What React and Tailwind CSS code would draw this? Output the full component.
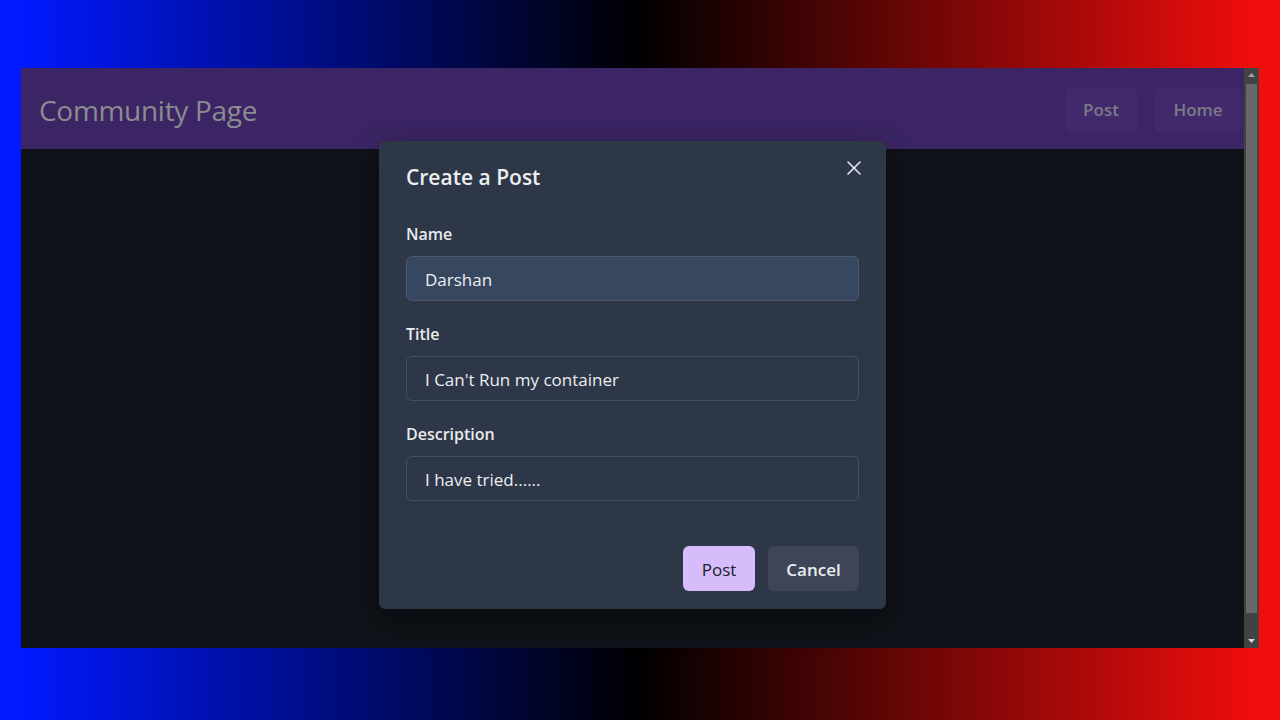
import React from "react";

const font = { fontFamily: '"Open Sans", "Noto Sans", sans-serif' };

function Field({ label, value, filled }) {
  return (
    <div className="flex flex-col">
      <div className="text-[16px] font-semibold text-[#e9eaec] leading-[24px] h-[24px]">{label}</div>
      <div
        className={
          "mt-[10px] h-[45px] rounded-[6px] border flex items-center pl-[18px] pt-[2px] text-[17px] text-[#eceef0] " +
          (filled ? "bg-[#374760] border-[#4b5870]" : "bg-transparent border-[#465063]")
        }
      >
        {value}
      </div>
    </div>
  );
}

export default function App() {
  return (
    <div
      className="relative w-[1280px] h-[720px] overflow-hidden bg-[linear-gradient(to_right,#0019ff_1.6%,#000_50%,#f20d0d_98.4%)] pt-[68px] pl-[21px]"
      style={font}
    >
      <div className="flex w-[1238px] h-[580px]">
        <div className="flex-1 flex flex-col">
          <div className="h-[81px] bg-[#3b2564] flex items-center justify-between pl-[18px] pr-[3px]">
            <div className="text-[28px] pt-[2px] text-[#8b8c90] tracking-[-0.3px]">Community Page</div>
            <div className="flex gap-[18px] pt-[2px]">
              <div className="w-[72px] h-[45px] rounded-[6px] bg-[#41296b] flex items-center justify-center text-[17px] font-semibold text-[#7c7b88]">Post</div>
              <div className="w-[86px] h-[45px] rounded-[6px] bg-[#41296b] flex items-center justify-center text-[17px] font-semibold text-[#7c7b88]">Home</div>
            </div>
          </div>
          <div className="flex-1 bg-[#0f1218]"></div>
        </div>
        <div className="w-[15px] bg-[#424242] flex flex-col items-center">
          <div className="h-[14px] flex items-center justify-center">
            <svg width="7" height="4" viewBox="0 0 7 4"><path d="M3.5 0L7 4H0z" fill="#a3a3a3" /></svg>
          </div>
          <div className="w-[11px] mt-[2px] h-[529px] bg-[#686868]"></div>
          <div className="flex-1"></div>
          <div className="h-[14px] flex items-center justify-center">
            <svg width="7" height="4" viewBox="0 0 7 4"><path d="M0 0H7L3.5 4z" fill="#d9d9d9" /></svg>
          </div>
        </div>
      </div>

      <div className="absolute left-[379px] top-[141px] w-[507px] h-[468px] rounded-[6px] bg-[#2d3748] shadow-[0_10px_30px_rgba(0,0,0,0.4)] px-[27px] flex flex-col">
        <div className="h-[72px] flex items-center pt-[2px]">
          <div className="text-[21px] font-semibold text-[#eceef0]">Create a Post</div>
        </div>
        <button className="absolute left-[459px] top-[11px] w-[32px] h-[32px] flex items-center justify-center">
          <svg width="14" height="14" viewBox="0 0 14 14">
            <path d="M1 1L13 13M13 1L1 13" stroke="#e5e7ea" strokeWidth="1.6" strokeLinecap="round" />
          </svg>
        </button>
        <div className="flex flex-col gap-[21px] mt-[9px]">
          <Field label="Name" value="Darshan" filled />
          <Field label="Title" value="I Can't Run my container" />
          <Field label="Description" value="I have tried......" />
        </div>
        <div className="flex justify-end gap-[13px] mt-[45px]">
          <div className="w-[72px] h-[45px] pt-[2px] rounded-[6px] bg-[#d6bcfa] flex items-center justify-center text-[17px] font-medium text-[#1a202c]">Post</div>
          <div className="w-[91px] h-[45px] pt-[2px] rounded-[6px] bg-[#3d4556] flex items-center justify-center text-[17px] font-semibold text-[#eceef0]">Cancel</div>
        </div>
      </div>
    </div>
  );
}
